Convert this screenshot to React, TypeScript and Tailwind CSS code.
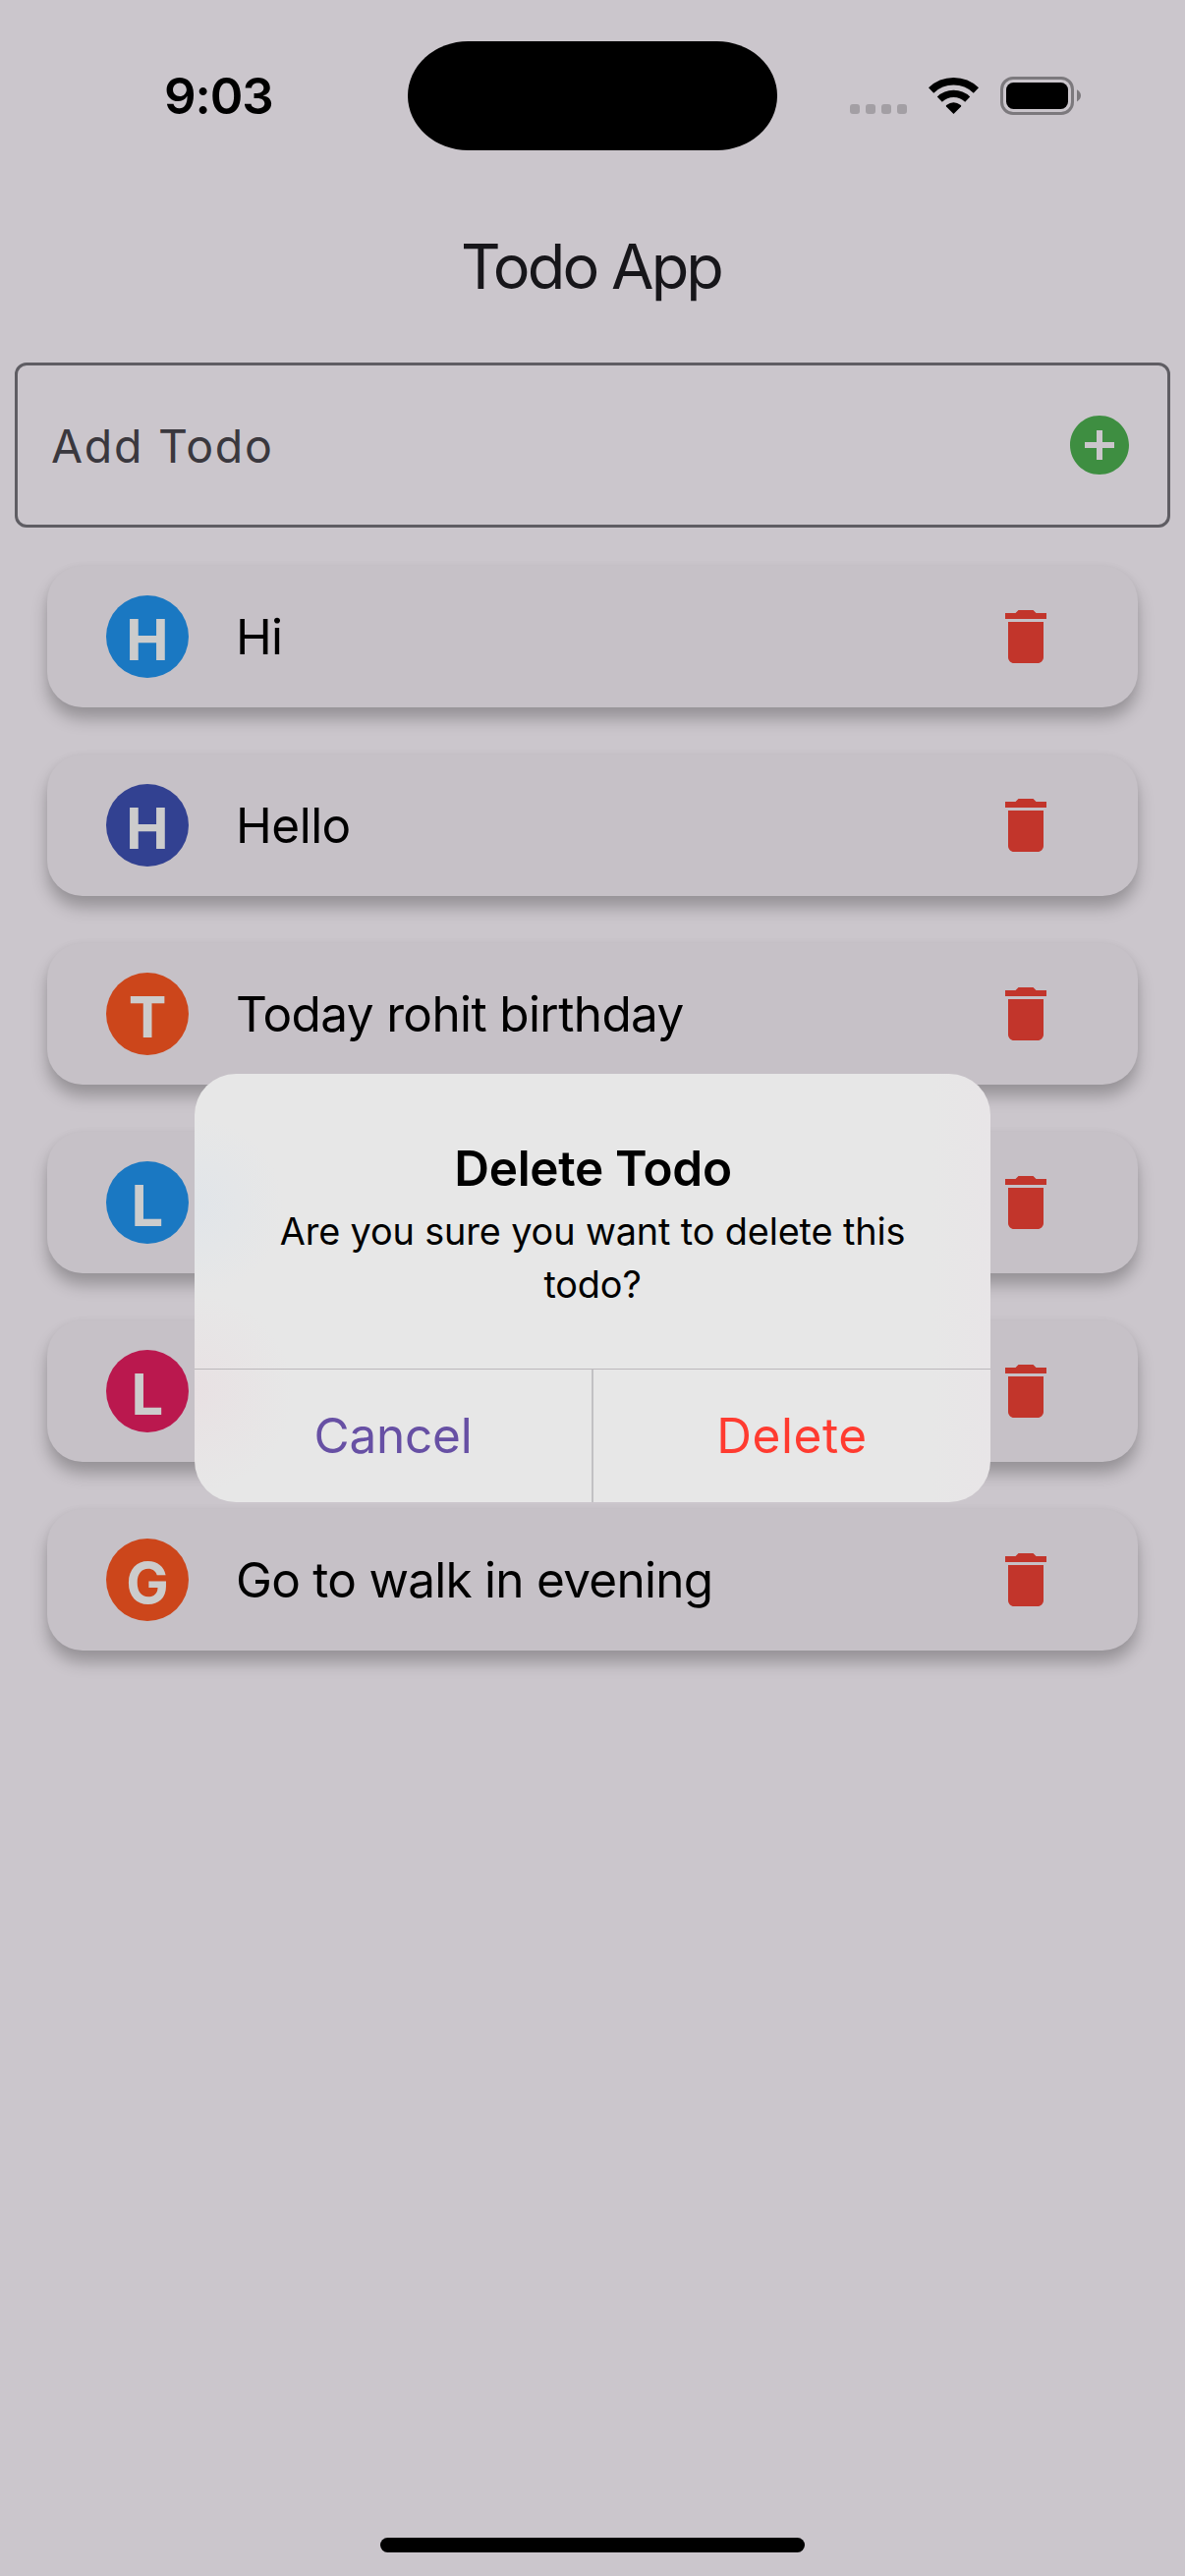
import type { ReactNode } from "react";

type Todo = { initial: string; label: string; color: string; spacing: string };

const todos: Todo[] = [
  { initial: "H", label: "Hi", color: "bg-[#1a78c2]", spacing: "tracking-[-0.8px]" },
  { initial: "H", label: "Hello", color: "bg-[#324191]", spacing: "tracking-[-0.5px]" },
  { initial: "T", label: "Today rohit birthday", color: "bg-[#cc461b]", spacing: "tracking-[-0.62px]" },
  { initial: "L", label: "", color: "bg-[#1a78c2]", spacing: "" },
  { initial: "L", label: "", color: "bg-[#ba184e]", spacing: "" },
  { initial: "G", label: "Go to walk in evening", color: "bg-[#cc461b]", spacing: "tracking-[-0.74px]" },
];

function WifiIcon() {
  return (
    <svg width="52" height="39" viewBox="0 0 52 39" fill="none">
      <path d="M2.6 13.9A33.2 33.2 0 0 1 48.4 13.9" stroke="#000" strokeWidth="7.6" />
      <path d="M11.3 23.1A20.6 20.6 0 0 1 39.7 23.1" stroke="#000" strokeWidth="7.3" />
      <path d="M25.5 38L18 30.4Q17.4 29.7 18.2 29Q25.5 23.4 32.8 29Q33.6 29.7 33 30.4Z" fill="#000" />
    </svg>
  );
}

function BatteryIcon() {
  return (
    <svg width="83" height="39" viewBox="0 0 83 39" fill="none">
      <rect x="1.5" y="1.5" width="72" height="36" rx="11.5" stroke="#7c797d" strokeWidth="3" />
      <rect x="6" y="6" width="63" height="27" rx="7.5" fill="#000" />
      <path d="M78 13.2Q82 15.5 82 19.3T78 25.4Z" fill="#7c797d" />
    </svg>
  );
}

function TrashIcon() {
  return (
    <svg className="size-[72px]" viewBox="0 0 24 24" fill="#c2352b">
      <path d="M6 19c0 1.1.9 2 2 2h8c1.1 0 2-.9 2-2V7H6v12zM19 4h-3.5l-1-1h-5l-1 1H5v2h14V4z" />
    </svg>
  );
}

function AddIcon() {
  return (
    <svg className="size-[72px]" viewBox="0 0 24 24" fill="#3e8e41">
      <path d="M12 2C6.48 2 2 6.48 2 12s4.48 10 10 10 10-4.48 10-10S17.52 2 12 2zm5 11h-4v4h-2v-4H7v-2h4V7h2v4h4v2z" />
    </svg>
  );
}

function StatusBar() {
  return (
    <div className="grid h-[194px] grid-cols-[415px_376px_415px] items-center">
      <span className="pt-px pl-[167px] text-[51px] leading-none font-semibold tracking-[-1.1px] text-black">
        9:03
      </span>
      <div className="h-[111px] rounded-[62px/56px] bg-black" />
      <div className="mt-px flex items-start pl-[74px]">
        <div className="mt-[28px] mr-[22px] flex gap-[6px]">
          {[0, 1, 2, 3].map((n) => (
            <span key={n} className="size-[10px] rounded-[3px] bg-[#a39fa4]" />
          ))}
        </div>
        <div className="mr-[21px]">
          <WifiIcon />
        </div>
        <BatteryIcon />
      </div>
    </div>
  );
}

function TodoCard({ todo }: { todo: Todo }) {
  return (
    <li className="flex h-[144px] items-center rounded-[36px] bg-[#c6c1c7] pr-[78px] pl-[60px] shadow-[0_12px_16px_rgba(0,0,0,0.25),0_0_8px_rgba(0,0,0,0.03)]">
      <span
        className={`flex size-[84px] items-center justify-center rounded-full pt-[6px] text-[58px] leading-none font-bold text-[#cccccc] ${todo.color}`}
      >
        {todo.initial}
      </span>
      <span className={`ml-[48px] flex-1 pt-px text-[49.5px] leading-none text-black ${todo.spacing}`}>
        {todo.label}
      </span>
      <TrashIcon />
    </li>
  );
}

function DialogAction({ className, children }: { className: string; children: ReactNode }) {
  return (
    <button className={`flex flex-1 items-center justify-center text-[49.5px] leading-none ${className}`}>
      {children}
    </button>
  );
}

function DeleteDialog() {
  return (
    <div className="absolute inset-0 flex items-center justify-center">
      <div
        role="alertdialog"
        className="flex h-[436px] w-[810px] flex-col overflow-hidden rounded-[42px] bg-[#e7e7e7] bg-[radial-gradient(circle_at_0px_135px,#e1e5e9_0px,transparent_90px),radial-gradient(circle_at_0px_325px,#e8e1e3_0px,transparent_100px),linear-gradient(to_left,#e8e5e7_0px,transparent_60px)] text-center"
      >
        <div className="h-[300px] pt-[66px] text-black">
          <h2 className="pl-px text-[49.5px] leading-[60px] font-semibold tracking-[-0.32px]">Delete Todo</h2>
          <p className="mt-[7px] text-[37.8px] leading-[54px] tracking-[-0.12px]">
            Are you sure you want to delete this
            <br />
            todo?
          </p>
        </div>
        <div className="flex flex-1 border-t border-[#bbb8bb]">
          <DialogAction className="tracking-[-0.2px] text-[#6750a4]">Cancel</DialogAction>
          <div className="w-[2px] bg-[#c2c1c4]" />
          <DialogAction className="tracking-[0.57px] text-[#ff3b30]">Delete</DialogAction>
        </div>
      </div>
    </div>
  );
}

export default function App() {
  return (
    <div className="relative flex h-[2622px] w-[1206px] flex-col overflow-hidden bg-[#cbc6cc] font-['Inter',sans-serif]">
      <StatusBar />
      <h1 className="pr-[3px] text-center text-[63px] leading-[154px] tracking-[-2.9px] text-[#17161a]">Todo App</h1>
      <div className="mx-[15px] mt-[21px] flex h-[168px] items-center justify-between rounded-[12px] border-[3px] border-[#5f5d63] pr-[33px] pl-[34px]">
        <span className="pt-[2px] text-[46.5px] leading-none tracking-[1.74px] text-[#3a383e]">Add Todo</span>
        <AddIcon />
      </div>
      <ul className="mt-[39px] flex flex-col gap-[48px] px-[48px]">
        {todos.map((todo, index) => (
          <TodoCard key={index} todo={todo} />
        ))}
      </ul>
      <div className="mx-auto mt-auto mb-[24px] h-[15px] w-[432px] rounded-full bg-black" />
      <DeleteDialog />
    </div>
  );
}
